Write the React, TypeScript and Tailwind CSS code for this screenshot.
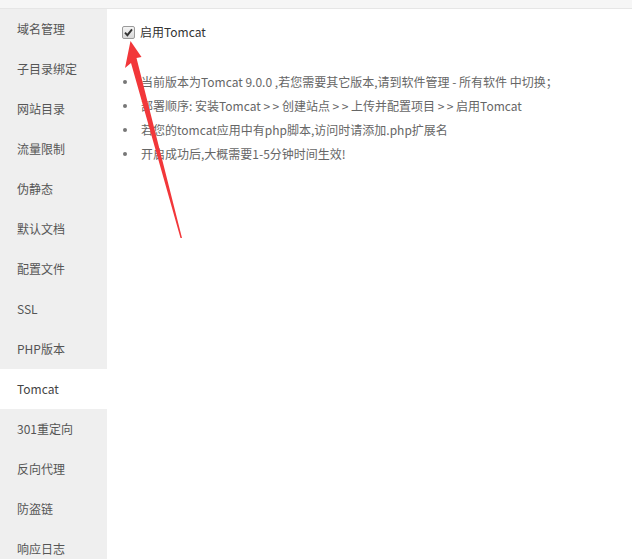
const menu = [
  "域名管理",
  "子目录绑定",
  "网站目录",
  "流量限制",
  "伪静态",
  "默认文档",
  "配置文件",
  "SSL",
  "PHP版本",
  "Tomcat",
  "301重定向",
  "反向代理",
  "防盗链",
  "响应日志",
];

const tips = [
  "当前版本为Tomcat 9.0.0 ,若您需要其它版本,请到软件管理 - 所有软件 中切换；",
  "部署顺序: 安装Tomcat >\u2009> 创建站点 >\u2009> 上传并配置项目 >\u2009> 启用Tomcat",
  "若您的tomcat应用中有php脚本,访问时请添加.php扩展名",
  "开启成功后,大概需要1-5分钟时间生效!",
];

export default function App() {
  return (
    <div
      className="relative flex h-[559px] w-[632px] flex-col overflow-hidden bg-white text-[12px]"
      style={{ fontFamily: '"Microsoft YaHei", "Noto Sans CJK SC", "Noto Sans", sans-serif' }}
    >
      {/* top strip */}
      <div className="h-[9px] shrink-0 border-b border-[#e6e6e6] bg-[#f6f6f6]" />

      <div className="flex flex-1">
        {/* ── side menu ───────────────────────────── */}
        <div className="w-[107px] shrink-0 bg-[#efefef]">
          {menu.map((m) => (
            <div
              key={m}
              className={
                m === "Tomcat"
                  ? "flex h-10 items-center bg-white pl-[17px] text-[#444]"
                  : "flex h-10 items-center pl-[17px] text-[#555]"
              }
            >
              {m}
            </div>
          ))}
        </div>

        {/* ── content ─────────────────────────────── */}
        <div className="flex-1 pl-[15px] pt-[15px]">
          <div className="flex h-4 items-center gap-[5px] text-[#333]">
            <span className="flex h-[13px] w-[13px] items-center justify-center rounded-[2px] border border-[#9a9a9a] bg-gradient-to-b from-[#f4f4f4] to-[#d8d8d8]">
              <svg width="9" height="9" viewBox="0 0 9 9">
                <path d="M1 4.6 L3.4 7.2 L8 1.4" fill="none" stroke="#333" strokeWidth="1.9" />
              </svg>
            </span>
            启用Tomcat
          </div>

          <ul className="mt-[30px] text-[#666]">
            {tips.map((t) => (
              <li key={t} className="flex h-6 items-center">
                <span className="ml-[1px] mr-[14px] h-[4px] w-[4px] rounded-full bg-[#777]" />
                {t}
              </li>
            ))}
          </ul>
        </div>
      </div>

      {/* red arrow annotation */}
      <svg
        className="pointer-events-none absolute left-0 top-0"
        width="632"
        height="559"
        viewBox="0 0 632 559"
      >
        <polygon
          points="130.5,41 141.5,57 136.5,58 182,238 180.5,238 131,63 125,68"
          fill="#f2373a"
        />
      </svg>
    </div>
  );
}
